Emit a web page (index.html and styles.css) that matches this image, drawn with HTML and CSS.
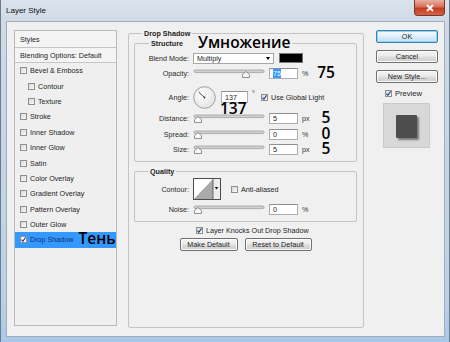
FILE: index.html
```html
<!DOCTYPE html>
<html lang="en">

<head>
    <meta charset="UTF-8" />
    <meta name="viewport" content="width=device-width, initial-scale=1.0" />
    <title>Layer Style</title>
    <link rel="stylesheet" href="styles.css">
</head>

<body>
    <div class="window">
        <header class="titlebar">
            <span class="title">Layer Style</span>
            <span class="close">
                <svg width="10" height="8" viewBox="0 0 10 8"><path d="M2 1 L8 7 M8 1 L2 7" stroke="#fff" stroke-width="1.8" /></svg>
            </span>
        </header>

        <main class="client">
            <!-- left: list of layer styles -->
            <div class="styles-panel">
                <div class="panel-head head-styles">Styles</div>
                <div class="panel-head">Blending Options: Default</div>
                <ul class="style-list">
                    <li><span class="cb"></span>Bevel &amp; Emboss</li>
                    <li class="sub"><span class="cb"></span>Contour</li>
                    <li class="sub"><span class="cb"></span>Texture</li>
                    <li><span class="cb"></span>Stroke</li>
                    <li><span class="cb"></span>Inner Shadow</li>
                    <li><span class="cb"></span>Inner Glow</li>
                    <li><span class="cb"></span>Satin</li>
                    <li><span class="cb"></span>Color Overlay</li>
                    <li><span class="cb"></span>Gradient Overlay</li>
                    <li><span class="cb"></span>Pattern Overlay</li>
                    <li><span class="cb"></span>Outer Glow</li>
                    <li class="selected">
                        <span class="cb"><svg width="5" height="5" viewBox="0 0 5 5"><path d="M0.5 2.6 L1.9 4.3 L4.6 0.4" fill="none" stroke="#1c3a8f" stroke-width="1.1" /></svg></span>Drop Shadow<span class="note note-list">Тень</span>
                    </li>
                </ul>
            </div>

            <!-- middle: drop shadow settings -->
            <fieldset class="effect">
                <legend>Drop Shadow</legend>

                <fieldset class="group structure">
                    <legend>Structure<span class="note note-legend">Умножение</span></legend>

                    <div class="row">
                        <span class="lbl">Blend Mode:</span>
                        <span class="select">Multiply<span class="arrow"></span></span>
                        <span class="color-swatch"></span>
                    </div>

                    <div class="row">
                        <span class="lbl">Opacity:</span>
                        <svg class="slider" width="72" height="12" viewBox="0 0 72 12">
                            <rect x="1" y="3" width="70" height="2.6" rx="1.3" fill="#d2d2d2" stroke="#959595" stroke-width="0.7" />
                            <polygon points="49.5,10.5 49.5,7.5 53,4.5 56.5,7.5 56.5,10.5" fill="#f7f7f7" stroke="#777" stroke-width="0.8" />
                        </svg>
                        <span class="field"><span class="selected-text">75</span></span>
                        <span class="unit">%</span>
                        <span class="note note-row">75</span>
                    </div>

                    <div class="row angle-row">
                        <span class="lbl">Angle:</span>
                        <svg class="dial" width="23" height="23" viewBox="0 0 23 23">
                            <defs>
                                <radialGradient id="dialFill" cx="40%" cy="35%" r="70%">
                                    <stop offset="0" stop-color="#ffffff" />
                                    <stop offset="1" stop-color="#e2e2e2" />
                                </radialGradient>
                            </defs>
                            <circle cx="11.5" cy="11.5" r="10.8" fill="url(#dialFill)" stroke="#8c8c8c" stroke-width="0.8" />
                            <line x1="11.5" y1="11.5" x2="5.6" y2="6" stroke="#333" stroke-width="0.9" />
                            <circle cx="11.5" cy="11.5" r="0.9" fill="#333" />
                        </svg>
                        <span class="field angle-field">137<span class="note note-below">137</span></span>
                        <span class="deg">°</span>
                        <span class="cb cb-light"><svg width="5" height="5" viewBox="0 0 5 5"><path d="M0.5 2.6 L1.9 4.3 L4.6 0.4" fill="none" stroke="#1c3a8f" stroke-width="1.1" /></svg></span>
                        <span class="cb-text">Use Global Light</span>
                    </div>

                    <div class="row row-distance">
                        <span class="lbl">Distance:</span>
                        <svg class="slider" width="72" height="12" viewBox="0 0 72 12">
                            <rect x="1" y="3" width="70" height="2.6" rx="1.3" fill="#d2d2d2" stroke="#959595" stroke-width="0.7" />
                            <polygon points="1.5,10.5 1.5,7.5 5,4.5 8.5,7.5 8.5,10.5" fill="#f7f7f7" stroke="#777" stroke-width="0.8" />
                        </svg>
                        <span class="field">5</span>
                        <span class="unit">px</span>
                        <span class="note note-row">5</span>
                    </div>

                    <div class="row row-spread">
                        <span class="lbl">Spread:</span>
                        <svg class="slider" width="72" height="12" viewBox="0 0 72 12">
                            <rect x="1" y="3" width="70" height="2.6" rx="1.3" fill="#d2d2d2" stroke="#959595" stroke-width="0.7" />
                            <polygon points="1.5,10.5 1.5,7.5 5,4.5 8.5,7.5 8.5,10.5" fill="#f7f7f7" stroke="#777" stroke-width="0.8" />
                        </svg>
                        <span class="field">0</span>
                        <span class="unit">%</span>
                        <span class="note note-row">0</span>
                    </div>

                    <div class="row">
                        <span class="lbl">Size:</span>
                        <svg class="slider" width="72" height="12" viewBox="0 0 72 12">
                            <rect x="1" y="3" width="70" height="2.6" rx="1.3" fill="#d2d2d2" stroke="#959595" stroke-width="0.7" />
                            <polygon points="1.5,10.5 1.5,7.5 5,4.5 8.5,7.5 8.5,10.5" fill="#f7f7f7" stroke="#777" stroke-width="0.8" />
                        </svg>
                        <span class="field">5</span>
                        <span class="unit">px</span>
                        <span class="note note-row">5</span>
                    </div>
                </fieldset>

                <fieldset class="group quality">
                    <legend>Quality</legend>

                    <div class="row contour-row">
                        <span class="lbl">Contour:</span>
                        <svg class="contour" width="28" height="22" viewBox="0 0 28 22">
                            <rect x="0.5" y="0.5" width="27" height="21" fill="#fff" stroke="#4d4d4d" />
                            <polygon points="1,21 20,1 20,21" fill="#a9a9a9" />
                            <rect x="20" y="1" width="7" height="20" fill="#ececec" />
                            <line x1="20" y1="1" x2="20" y2="21" stroke="#4d4d4d" stroke-width="0.8" />
                            <polygon points="21.8,9 25.2,9 23.5,11.5" fill="#000" />
                        </svg>
                        <span class="cb cb-aa"></span>
                        <span class="cb-text">Anti-aliased</span>
                    </div>

                    <div class="row row-noise">
                        <span class="lbl">Noise:</span>
                        <svg class="slider" width="72" height="12" viewBox="0 0 72 12">
                            <rect x="1" y="3" width="70" height="2.6" rx="1.3" fill="#d2d2d2" stroke="#959595" stroke-width="0.7" />
                            <polygon points="1.5,10.5 1.5,7.5 5,4.5 8.5,7.5 8.5,10.5" fill="#f7f7f7" stroke="#777" stroke-width="0.8" />
                        </svg>
                        <span class="field">0</span>
                        <span class="unit">%</span>
                    </div>
                </fieldset>

                <div class="knock-row">
                    <span class="cb"><svg width="5" height="5" viewBox="0 0 5 5"><path d="M0.5 2.6 L1.9 4.3 L4.6 0.4" fill="none" stroke="#1c3a8f" stroke-width="1.1" /></svg></span>
                    <span class="cb-text">Layer Knocks Out Drop Shadow</span>
                </div>

                <div class="btn-row">
                    <button class="btn btn-make">Make Default</button>
                    <button class="btn btn-reset">Reset to Default</button>
                </div>
            </fieldset>

            <!-- right: dialog buttons and preview -->
            <div class="side">
                <button class="btn btn-ok">OK</button>
                <button class="btn">Cancel</button>
                <button class="btn">New Style...</button>
                <div class="preview-check">
                    <span class="cb"><svg width="5" height="5" viewBox="0 0 5 5"><path d="M0.5 2.6 L1.9 4.3 L4.6 0.4" fill="none" stroke="#1c3a8f" stroke-width="1.1" /></svg></span>
                    <span class="cb-text">Preview</span>
                </div>
                <div class="preview">
                    <div class="preview-square"></div>
                </div>
            </div>
        </main>
    </div>
</body>

</html>
```

FILE: styles.css
```css
* {
    box-sizing: border-box;
}

body {
    margin: 0;
    font-family: "Liberation Sans", Arial, sans-serif;
    font-size: 7.2px;
    color: #1e1e1e;
    background: #c6d5e4;
}

/* window frame */

.window {
    width: 450px;
    height: 342px;
    padding: 0 4px 5px 5px;
    background: linear-gradient(#dbe3ec 0, #cfdae6 22px, #bcd0e6 300px, #a9c8e8 100%);
    border-left: 1px solid #6b7c8e;
    border-right: 1px solid #6b7c8e;
    overflow: hidden;
}

.titlebar {
    height: 21px;
    display: flex;
    justify-content: space-between;
    align-items: flex-start;
}

.title {
    padding: 6px 0 0 0;
    font-size: 8px;
    line-height: 10px;
    color: #111;
}

.close {
    width: 31px;
    height: 16px;
    display: flex;
    align-items: center;
    justify-content: center;
    background: linear-gradient(#eab0a2 0, #d8705c 45%, #c43c22 55%, #d5624a 100%);
    border: 1px solid #7a3428;
    border-top: none;
    border-radius: 0 0 4px 4px;
}

.client {
    height: 316px;
    background: #f0f0f0;
    border: 1px solid #9fadbc;
    padding: 8px 0 0 7px;
    display: grid;
    grid-template-columns: 103px 236px 62px;
    column-gap: 11px;
    align-items: start;
}

/* styles list */

.styles-panel {
    height: 296px;
    border: 1px solid #b9b9b9;
    background: #efefef;
}

.panel-head {
    height: 15px;
    display: flex;
    align-items: center;
    padding-left: 5px;
    background: #f4f4f4;
    border-bottom: 1px solid #c6c6c6;
}

.head-styles {
    height: 17px;
}

.style-list {
    list-style: none;
    margin: 0;
    padding: 0;
}

.style-list li {
    height: 15.4px;
    display: flex;
    align-items: center;
    padding-left: 5px;
}

.style-list li.sub {
    padding-left: 13px;
}

.style-list li.selected {
    background: #3399ff;
    color: #13306e;
}

.cb {
    width: 7px;
    height: 7px;
    flex: none;
    display: inline-flex;
    align-items: center;
    justify-content: center;
    margin-right: 3px;
    border: 1px solid #8e8f8f;
    background: linear-gradient(135deg, #d8d8d8, #fbfbfb);
}

.selected .cb {
    background: #fff;
}

/* annotation text laid over the dialog */

.note {
    font-family: "Open Sans", "Liberation Sans", sans-serif;
    font-weight: 600;
    font-size: 15.5px;
    color: #000;
}

.note-list {
    margin-left: 5px;
    line-height: 10px;
    margin-bottom: 4.6px;
}

.note-legend {
    margin-left: 15px;
    line-height: 0;
    vertical-align: -2.5px;
}

.note-row {
    width: 22px;
    text-align: center;
    line-height: 15px;
    margin-bottom: 2px;
}

.note-below {
    position: absolute;
    left: -2px;
    top: 10px;
    line-height: 12px;
}

/* drop shadow panel */

fieldset {
    margin: 0;
    min-width: 0;
    border: 1px solid #c4c4c4;
    border-radius: 2px;
}

legend {
    padding: 0 2px;
    line-height: 9px;
    font-weight: bold;
}

.effect {
    margin-top: -1.5px;
    height: 299.5px;
    padding: 1px 6px 0 5px;
}

.effect > legend {
    margin-left: 8px;
}

.group {
    padding: 0;
}

.structure {
    padding: 3px 0 4px 0;
}

.structure > legend {
    margin-left: 14px;
}

.quality {
    margin-top: 5px;
    padding: 2.8px 0 4.7px 0;
}

.quality > legend {
    margin-left: 13px;
}

.row {
    height: 15px;
    display: flex;
    align-items: center;
}

.lbl {
    width: 54px;
    margin-right: 4px;
    text-align: right;
    flex: none;
    color: #2a2a2a;
}

.select {
    width: 81px;
    height: 11px;
    display: flex;
    align-items: center;
    justify-content: space-between;
    padding: 0 3px;
    background: #fff;
    border: 1px solid #a7a7a7;
}

.arrow {
    width: 0;
    height: 0;
    border-left: 2.5px solid transparent;
    border-right: 2.5px solid transparent;
    border-top: 3px solid #000;
}

.color-swatch {
    width: 24px;
    height: 10px;
    margin-left: 5px;
    background: #000;
    border: 1px solid #777;
}

.slider {
    flex: none;
    display: block;
}

.field {
    position: relative;
    width: 29px;
    height: 11px;
    margin-left: 4px;
    padding-left: 3px;
    display: flex;
    align-items: center;
    background: #fff;
    border: 1px solid #abadb3;
    border-top-color: #8e9096;
    flex: none;
}

.selected-text {
    background: #3399ff;
    color: #fff;
}

.unit {
    width: 13px;
    margin-left: 4px;
    flex: none;
    color: #333;
}

.angle-row {
    height: 24px;
    margin-top: 4.5px;
}

.dial {
    flex: none;
    display: block;
}

.angle-field {
    width: 27px;
    height: 12px;
    margin-left: 5px;
}

.deg {
    margin-left: 4px;
    align-self: flex-start;
    margin-top: 4px;
    width: 3px;
}

.cb-light {
    margin-left: 6px;
}

.row-distance {
    margin-top: 1.5px;
}

.row-spread {
    margin-top: 1px;
}

.contour-row {
    height: 22px;
}

.contour {
    flex: none;
    display: block;
}

.cb-aa {
    margin-left: 10px;
}

.row-noise {
    margin-top: 1.5px;
}

.knock-row {
    margin-top: 2.5px;
    height: 11px;
    display: flex;
    align-items: center;
    padding-left: 62px;
}

.btn-row {
    margin-top: 2.5px;
    display: flex;
    justify-content: center;
    gap: 7px;
}

/* buttons */

.btn {
    height: 13px;
    padding: 0;
    font-family: "Liberation Sans", Arial, sans-serif;
    font-size: 7.2px;
    color: #1e1e1e;
    border: 1px solid #707070;
    border-radius: 2px;
    background: linear-gradient(#f4f4f4 0%, #ebebeb 48%, #dddddd 52%, #cfcfcf 100%);
    box-shadow: inset 0 0 0 1px #fbfbfb;
}

.btn-make {
    width: 58px;
}

.btn-reset {
    width: 67px;
}

.side {
    margin-left: 1px;
    display: flex;
    flex-direction: column;
    gap: 7px;
}

.side .btn {
    width: 62px;
}

.btn-ok {
    border-color: #3c7fb1;
    background: linear-gradient(#f2f9fd 0%, #e6f3fb 48%, #d6ebf7 52%, #c8e2f2 100%);
    box-shadow: inset 0 0 0 1px #8fd3f5;
}

.preview-check {
    margin-top: -2px;
    height: 10px;
    display: flex;
    align-items: center;
    padding-left: 9px;
}

.preview-check .cb-text {
    font-size: 7.6px;
}

.preview {
    width: 47px;
    height: 45px;
    margin: -2px 0 0 7px;
    display: flex;
    align-items: center;
    justify-content: center;
    background: #d8d8d8;
    border: 1px solid #cacaca;
}

.preview-square {
    width: 21px;
    height: 23px;
    margin-top: 2px;
    background: #4d4d4d;
    border-radius: 1px;
    box-shadow: 2px 2px 2px rgba(0, 0, 0, 0.45);
}
```
